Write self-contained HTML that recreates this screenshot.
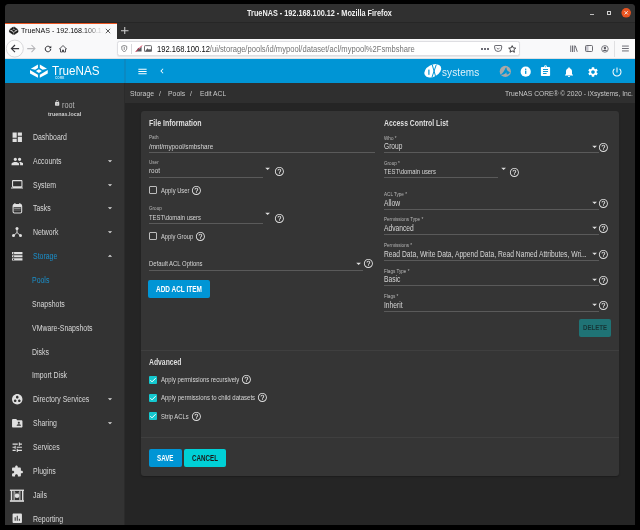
<!DOCTYPE html>
<html><head><meta charset="utf-8">
<style>
*{margin:0;padding:0;box-sizing:border-box}
html,body{width:640px;height:530px;overflow:hidden;background:#000}
body{position:relative;font-family:"Liberation Sans",sans-serif}
.a{position:absolute;display:block}
.t{position:absolute;white-space:nowrap;line-height:1}
#tl{position:absolute;left:0;top:0;width:640px;height:530px;will-change:transform}
</style></head><body>
<div class="a" style="left:5px;top:4px;width:630px;height:521px;background:#252525;border-radius:4px 4px 0 0"></div>
<div class="a" style="left:5px;top:4px;width:630px;height:18px;background:#303030;border-radius:4px 4px 0 0"></div>
<div class="a" style="left:590.1px;top:13.8px;width:4.2px;height:1px;background:#bdbdbd;"></div>
<div class="a" style="left:606.9px;top:10.8px;width:4.4px;height:4.3px;border:0.9px solid #d0d0d0"></div>
<svg class="a" style="left:616px;top:3px" width="20" height="20" viewBox="616 3 20 20"><circle cx="626.2" cy="12.8" r="4.75" fill="#e95420"/><path d="M624.6 11.2L627.8 14.4M627.8 11.2L624.6 14.4" stroke="#f4f4f4" stroke-width="0.9"/></svg>
<div class="a" style="left:5px;top:22px;width:630px;height:17px;background:#2d2d2d;"></div>
<div class="a" style="left:5px;top:22px;width:630px;height:1px;background:#262626;"></div>
<div class="a" style="left:5px;top:23px;width:111.5px;height:16px;background:#f9f9fa;"></div>
<div class="a" style="left:5px;top:23px;width:111.5px;height:1px;background:#e95420;"></div>
<svg class="a" style="left:7.7px;top:24.9px" width="11.6" height="11.35" viewBox="0 0 636 530" preserveAspectRatio="none"><g fill="#111" stroke="#111" stroke-width="28" stroke-linejoin="round"><path d="M100 205L290 92V185L215 232Z"/><path d="M340 92L530 205 415 232 340 185Z"/><path d="M235 268L315 218 395 268 315 318Z"/><path d="M80 240L290 362V447L80 332Z"/><path d="M550 240L340 362V447L550 332Z"/></g></svg>
<svg class="a" style="left:105px;top:27.5px" width="6" height="6" viewBox="0 0 6 6"><path d="M0.8 0.8L5.2 5.2M5.2 0.8L0.8 5.2" stroke="#333" stroke-width="0.8"/></svg>
<svg class="a" style="left:121.3px;top:26.6px" width="7.5" height="7.5" viewBox="0 0 8 8"><path d="M4 0V8M0 4H8" stroke="#d0d0d0" stroke-width="1.1"/></svg>
<div class="a" style="left:5px;top:39px;width:630px;height:20px;background:#f9f9fa;"></div>
<div class="a" style="left:5px;top:58px;width:630px;height:1px;background:#e0e0e2;"></div>
<svg class="a" style="left:0;top:36px" width="40" height="24" viewBox="0 36 40 24"><circle cx="14.8" cy="48.6" r="8.5" fill="#fcfcfc" stroke="#cfcfd2" stroke-width="0.8"/><path d="M11.4 48.6H19.1M15.0 45.0L11.4 48.6L15.0 52.2" stroke="#38383d" stroke-width="1.15" fill="none"/><path d="M27.2 48.6H35.0M31.5 45.0L35.0 48.6L31.5 52.2" stroke="#b5b5b8" stroke-width="1.05" fill="none"/></svg>
<svg class="a" style="left:43.5px;top:44.6px" width="8" height="8" viewBox="0 0 16 16"><path d="M13.5 8a5.5 5.5 0 1 1-1.8-4.1" stroke="#2a2a2e" stroke-width="2" fill="none"/><path d="M14.5 1.5v5h-5z" fill="#2a2a2e"/></svg>
<svg class="a" style="left:59px;top:45px" width="8" height="7.5" viewBox="0 0 16 15"><path d="M8 1L1 8h2v6h4v-4h2v4h4V8h2z" stroke="#2a2a2e" stroke-width="1.6" fill="none" stroke-linejoin="round"/></svg>
<div class="a" style="left:116.6px;top:41.4px;width:403px;height:14.7px;background:#fff;border:0.8px solid #dedee2;border-radius:2.5px;box-shadow:0 0.5px 1px rgba(0,0,0,.08)"></div>
<svg class="a" style="left:121px;top:45px" width="6.5" height="7.2" viewBox="0 0 14 16"><path d="M7 1L1.5 3v4.5C1.5 11 4 13.5 7 15c3-1.5 5.5-4 5.5-7.5V3z" stroke="#5a5a5e" stroke-width="1.6" fill="none"/><path d="M7 4v7" stroke="#5a5a5e" stroke-width="1.6"/></svg>
<div class="a" style="left:131px;top:43.5px;width:0.8px;height:10px;background:#d7d7db;"></div>
<svg class="a" style="left:135px;top:45px" width="7.5" height="7.5" viewBox="0 0 16 16"><path d="M2 14L7 6l3 2 4-6v12z" fill="#5a5a5e"/><path d="M1 15L15 1" stroke="#e22850" stroke-width="1.8"/></svg>
<svg class="a" style="left:144.3px;top:45px" width="8" height="7.3" viewBox="0 0 16 14"><rect x="1" y="1" width="14" height="12" rx="1.5" fill="none" stroke="#5a5a5e" stroke-width="1.8"/><path d="M2 12l5-6 3 3 2-2 3 3v2z" fill="#5a5a5e"/></svg>
<div class="a" style="left:481px;top:48px;width:1.6px;height:1.6px;border-radius:50%;background:#50505a"></div>
<div class="a" style="left:484px;top:48px;width:1.6px;height:1.6px;border-radius:50%;background:#50505a"></div>
<div class="a" style="left:487px;top:48px;width:1.6px;height:1.6px;border-radius:50%;background:#50505a"></div>
<svg class="a" style="left:494.3px;top:45px" width="8.3" height="7" viewBox="0 0 16 14"><path d="M2 1h12a1 1 0 0 1 1 1v4a7 7 0 0 1-14 0V2a1 1 0 0 1 1-1z" fill="none" stroke="#5b5b63" stroke-width="1.8"/><path d="M5 5.5l3 3 3-3" fill="none" stroke="#5b5b63" stroke-width="1.6"/></svg>
<svg class="a" style="left:508.2px;top:44.6px" width="8.4" height="8.4" viewBox="0 0 16 16"><path d="M8 1.2l2 4.3 4.7.5-3.5 3.2 1 4.6L8 11.4l-4.2 2.4 1-4.6L1.3 6l4.7-.5z" fill="none" stroke="#2a2a2e" stroke-width="1.7" stroke-linejoin="round"/></svg>
<svg class="a" style="left:569.5px;top:45px" width="8" height="7" viewBox="0 0 16 14"><path d="M1.5 1v13M5 1v13M8.5 1v13M10.5 1.5l4 12" stroke="#5b5b63" stroke-width="1.8"/></svg>
<svg class="a" style="left:585.2px;top:45px" width="8" height="7" viewBox="0 0 16 14"><rect x="1" y="1" width="14" height="12" rx="2" fill="none" stroke="#5b5b63" stroke-width="1.8"/><rect x="2" y="2" width="5" height="10" fill="#c4c4cc"/></svg>
<svg class="a" style="left:601.2px;top:44.8px" width="7.8" height="7.8" viewBox="0 0 16 16"><circle cx="8" cy="8" r="6.8" fill="none" stroke="#5b5b63" stroke-width="1.6"/><circle cx="8" cy="6.3" r="2.5" fill="#5b5b63"/><path d="M3.5 12.5c1-2.2 2.6-3 4.5-3s3.5.8 4.5 3" fill="#5b5b63"/></svg>
<div class="a" style="left:614.3px;top:41px;width:0.8px;height:16px;background:#e0e0e2;"></div>
<svg class="a" style="left:622.3px;top:45px" width="6.8" height="7" viewBox="0 0 14 14"><path d="M0 2h14M0 7h14M0 12h14" stroke="#50505a" stroke-width="1.7"/></svg>
<div class="a" style="left:5px;top:59px;width:630px;height:24px;background:#0095d5;"></div>
<div class="a" style="left:124px;top:59px;width:1.5px;height:24px;background:#0a89c2;"></div>
<svg class="a" style="left:27px;top:61px" width="24" height="20" viewBox="0 0 636 530"><g fill="#fff"><path d="M100 205L290 92V185L215 232Z"/><path d="M340 92L530 205 415 232 340 185Z"/><path d="M235 268L315 218 395 268 315 318Z"/><path d="M80 240L290 362V447L80 332Z"/><path d="M550 240L340 362V447L550 332Z"/></g></svg>
<svg class="a" style="left:137.10px;top:65.70px;" width="11" height="11" viewBox="0 0 24 24"><path fill="#fff" fill-rule="evenodd" d="M3 18h18v-2H3v2zm0-5h18v-2H3v2zm0-7v2h18V6H3z"/></svg>
<svg class="a" style="left:157.30px;top:66.40px;" width="10" height="10" viewBox="0 0 24 24"><path fill="#fff" fill-rule="evenodd" d="M15.41 7.41L14 6l-6 6 6 6 1.41-1.41L10.83 12z"/></svg>
<svg class="a" style="left:420px;top:60px" width="26" height="22" viewBox="420 60 26 22"><ellipse cx="432.8" cy="70.8" rx="9.0" ry="5.9" transform="rotate(-28 432.8 70.8)" fill="#fff"/><rect x="428.3" y="69.6" width="1.2" height="5.2" fill="#0095d5"/><path d="M432.2 64.6L435.8 77.2M436.3 64.6L432.0 77.2" stroke="#0095d5" stroke-width="1.0"/></svg>
<svg class="a" style="left:0;top:0" width="640" height="90" viewBox="0 0 640 90"><circle cx="505.3" cy="71.4" r="5.6" fill="#aba8a6"/><path d="M500.6 74.4C502.8 73.6 504.2 71.0 505.6 67.8L506.6 67.6C506.4 69.6 507.2 71.4 509.9 72.0C509.4 73.9 507.6 74.9 506.2 74.1C506.9 73.5 506.9 72.8 506.1 72.6C504.9 74.4 502.9 75.0 500.6 74.4Z" fill="#0095d5"/><circle cx="525.7" cy="71.7" r="5.1" fill="#fff"/><circle cx="525.7" cy="69.3" r="0.75" fill="#0095d5"/><rect x="525.05" y="70.6" width="1.3" height="3.3" fill="#0095d5"/><rect x="540.9" y="67.1" width="9.2" height="9" rx="0.8" fill="#fff"/><circle cx="545.5" cy="66.6" r="1.3" fill="#fff"/><circle cx="545.5" cy="66.8" r="0.5" fill="#0095d5"/><rect x="543" y="69.05" width="5" height="0.95" fill="#0095d5"/><rect x="543" y="71.05" width="5" height="0.95" fill="#0095d5"/><rect x="543" y="73.05" width="3.6" height="0.95" fill="#0095d5"/></svg>
<svg class="a" style="left:562.90px;top:65.60px;" width="12" height="12" viewBox="0 0 24 24"><path fill="#fff" fill-rule="evenodd" d="M12 22c1.1 0 2-.9 2-2h-4c0 1.1.89 2 2 2zm6-6v-5c0-3.07-1.64-5.64-4.5-6.32V4c0-.83-.67-1.5-1.5-1.5s-1.5.67-1.5 1.5v.68C7.63 5.36 6 7.92 6 11v5l-2 2v1h16v-1l-2-2z"/></svg>
<svg class="a" style="left:586.90px;top:65.60px;" width="12" height="12" viewBox="0 0 24 24"><path fill="#fff" fill-rule="evenodd" d="M19.14 12.94c.04-.3.06-.61.06-.94 0-.32-.02-.64-.07-.94l2.03-1.58c.18-.14.23-.41.12-.61l-1.92-3.32c-.12-.22-.37-.29-.59-.22l-2.39.96c-.5-.38-1.03-.7-1.62-.94l-.36-2.54c-.04-.24-.24-.41-.48-.41h-3.84c-.24 0-.43.17-.47.41l-.36 2.54c-.59.24-1.13.57-1.62.94l-2.39-.96c-.22-.08-.47 0-.59.22L2.74 8.87c-.12.21-.08.47.12.61l2.03 1.58c-.05.3-.09.63-.09.94s.02.64.07.94l-2.03 1.58c-.18.14-.23.41-.12.61l1.92 3.32c.12.22.37.29.59.22l2.39-.96c.5.38 1.03.7 1.62.94l.36 2.54c.05.24.24.41.48.41h3.84c.24 0 .44-.17.47-.41l.36-2.54c.59-.24 1.13-.56 1.62-.94l2.39.96c.22.08.47 0 .59-.22l1.92-3.32c.12-.22.07-.47-.12-.61l-2.01-1.58zM12 15.6c-1.98 0-3.6-1.62-3.6-3.6s1.62-3.6 3.6-3.6 3.6 1.62 3.6 3.6-1.62 3.6-3.6 3.6z"/></svg>
<svg class="a" style="left:610.60px;top:65.60px;" width="12" height="12" viewBox="0 0 24 24"><path fill="#fff" fill-rule="evenodd" d="M13 3h-2v10h2V3zm4.83 2.17l-1.42 1.42C17.99 7.86 19 9.81 19 12c0 3.87-3.13 7-7 7s-7-3.13-7-7c0-2.19 1.01-4.14 2.58-5.42L6.17 5.17C4.23 6.82 3 9.26 3 12c0 4.97 4.03 9 9 9s9-4.030 9-9c0-2.74-1.23-5.18-3.17-6.83z"/></svg>
<div class="a" style="left:5px;top:83px;width:119px;height:442px;background:#333333;"></div>
<div class="a" style="left:124px;top:83px;width:1px;height:442px;background:#2b2b2b;"></div>
<svg class="a" style="left:53.85px;top:100.05px;" width="6.3" height="6.3" viewBox="0 0 24 24"><path fill="#dcdcdc" fill-rule="evenodd" d="M18 8h-1V6c0-2.76-2.24-5-5-5S7 3.24 7 6v2H6c-1.1 0-2 .9-2 2v10c0 1.1.9 2 2 2h12c1.1 0 2-.9 2-2V10c0-1.1-.9-2-2-2zm-6 9c-1.1 0-2-.9-2-2s.9-2 2-2 2 .9 2 2-.9 2-2 2zm3.1-9H8.9V6c0-1.71 1.39-3.1 3.1-3.1 1.710 0 3.1 1.39 3.1 3.1v2z"/></svg>
<svg class="a" style="left:10.75px;top:130.65px;" width="12.5" height="12.5" viewBox="0 0 24 24"><path fill="#e0e0e0" fill-rule="evenodd" d="M3 13h8V3H3v10zm0 8h8v-6H3v6zm10 0h8V11h-8v10zm0-18v6h8V3h-8z"/></svg>
<svg class="a" style="left:10.55px;top:154.81px;" width="12.9" height="12.9" viewBox="0 0 24 24"><path fill="#e0e0e0" fill-rule="evenodd" d="M16 11c1.66 0 2.99-1.34 2.99-3S17.66 5 16 5c-1.66 0-3 1.34-3 3s1.34 3 3 3zm-8 0c1.66 0 2.99-1.34 2.99-3S9.660 5 8 5C6.34 5 5 6.34 5 8s1.34 3 3 3zm0 2c-2.33 0-7 1.17-7 3.5V19h14v-2.5c0-2.330-4.67-3.5-7-3.5zm8 0c-.29 0-.62.02-.97.05 1.16.84 1.97 1.97 1.970 3.45V19h6v-2.5c0-2.33-4.67-3.5-7-3.5z"/></svg>
<svg class="a" style="left:105.00px;top:155.76px;" width="10" height="10" viewBox="0 0 24 24"><path fill="#dcdcdc" fill-rule="evenodd" d="M7 10l5 5 5-5z"/></svg>
<svg class="a" style="left:10.75px;top:178.37px;" width="12.5" height="12.5" viewBox="0 0 24 24"><path fill="#e0e0e0" fill-rule="evenodd" d="M20 18c1.1 0 1.99-.9 1.99-2L22 6c0-1.1-.9-2-2-2H4c-1.1 0-2 .9-2 2v10c0 1.1.9 2 2 2H0v2h24v-2h-4zM4 6h16v10H4V6z"/></svg>
<svg class="a" style="left:105.00px;top:179.62px;" width="10" height="10" viewBox="0 0 24 24"><path fill="#dcdcdc" fill-rule="evenodd" d="M7 10l5 5 5-5z"/></svg>
<svg class="a" style="left:10.75px;top:202.23px" width="12.5" height="12.5" viewBox="0 0 24 24"><rect x="4" y="5" width="16.5" height="16" rx="2.5" fill="none" stroke="#e0e0e0" stroke-width="2"/><rect x="4" y="5" width="16.5" height="5" fill="#e0e0e0"/><rect x="6.5" y="2" width="2" height="4" fill="#e0e0e0"/><rect x="16" y="2" width="2" height="4" fill="#e0e0e0"/><rect x="6" y="11.5" width="12.5" height="2.5" fill="#8a8a8a"/><rect x="6" y="16" width="12.5" height="1.2" fill="#6a6a6a"/></svg>
<svg class="a" style="left:105.00px;top:203.48px;" width="10" height="10" viewBox="0 0 24 24"><path fill="#dcdcdc" fill-rule="evenodd" d="M7 10l5 5 5-5z"/></svg>
<svg class="a" style="left:105.00px;top:227.34px;" width="10" height="10" viewBox="0 0 24 24"><path fill="#dcdcdc" fill-rule="evenodd" d="M7 10l5 5 5-5z"/></svg>
<svg class="a" style="left:10.75px;top:249.95px;" width="12.5" height="12.5" viewBox="0 0 24 24"><path fill="#e0e0e0" fill-rule="evenodd" d="M2 20h20v-4H2v4zm2-3h2v2H4v-2zM2 4v4h20V4H2zm4 3H4V5h2v2zm-4 7h20v-4H2v4zm2-3h2v2H4v-2z"/></svg>
<svg class="a" style="left:105.00px;top:250.70px;" width="10" height="10" viewBox="0 0 24 24"><path fill="#dcdcdc" fill-rule="evenodd" d="M7 14l5-5 5 5z"/></svg>
<svg class="a" style="left:11px;top:225.84px" width="12" height="12" viewBox="0 0 24 24"><path d="M12 6V13L5.5 19M12 13L18.5 19" stroke="#e0e0e0" stroke-width="2" fill="none"/><circle cx="12" cy="5" r="3" fill="#e0e0e0"/><circle cx="5" cy="19" r="3" fill="#e0e0e0"/><circle cx="19" cy="19" r="3" fill="#e0e0e0"/></svg>
<svg class="a" style="left:10.75px;top:393.11px;" width="12.5" height="12.5" viewBox="0 0 24 24"><path fill="#e0e0e0" fill-rule="evenodd" d="M12 2C6.48 2 2 6.48 2 12s4.48 10 10 10 10-4.48 10-10S17.52 2 12 2zM8 17.5c-1.38 0-2.5-1.12-2.5-2.5s1.12-2.5 2.5-2.5 2.5 1.12 2.5 2.5-1.12 2.5-2.5 2.5zM9.5 8c0-1.38 1.12-2.5 2.5-2.5s2.5 1.12 2.5 2.5-1.12 2.5-2.5 2.5S9.5 9.38 9.5 8zm6.5 9.5c-1.38 0-2.5-1.12-2.5-2.5s1.12-2.5 2.5-2.5 2.5 1.12 2.5 2.5-1.12 2.5-2.5 2.5z"/></svg>
<svg class="a" style="left:105.00px;top:394.36px;" width="10" height="10" viewBox="0 0 24 24"><path fill="#dcdcdc" fill-rule="evenodd" d="M7 10l5 5 5-5z"/></svg>
<svg class="a" style="left:10.75px;top:416.97px;" width="12.5" height="12.5" viewBox="0 0 24 24"><path fill="#e0e0e0" fill-rule="evenodd" d="M20 6h-8l-2-2H4c-1.1 0-1.99.9-1.99 2L2 18c0 1.1.9 2 2 2h16c1.1 0 2-.9 2-2V8c0-1.1-.9-2-2-2zm-5 3c1.1 0 2 .9 2 2s-.9 2-2 2-2-.9-2-2 .9-2 2-2zm4 8h-8v-1c0-1.33 2.67-2 4-2s4 .67 4 2v1z"/></svg>
<svg class="a" style="left:105.00px;top:418.22px;" width="10" height="10" viewBox="0 0 24 24"><path fill="#dcdcdc" fill-rule="evenodd" d="M7 10l5 5 5-5z"/></svg>
<svg class="a" style="left:10.75px;top:440.83px;" width="12.5" height="12.5" viewBox="0 0 24 24"><path fill="#e0e0e0" fill-rule="evenodd" d="M3 17v2h6v-2H3zM3 5v2h10V5H3zm10 16v-2h8v-2h-8v-2h-2v6h2zM7 9v2H3v2h4v2h2V9H7zm14 4v-2H11v2h10zm-6-4h2V7h4V5h-4V3h-2v6z"/></svg>
<svg class="a" style="left:10.75px;top:464.69px;" width="12.5" height="12.5" viewBox="0 0 24 24"><path fill="#e0e0e0" fill-rule="evenodd" d="M20.5 11H19V7c0-1.1-.9-2-2-2h-4V3.5C13 2.12 11.88 1 10.5 1S8 2.12 8 3.5V5H4c-1.1 0-1.99.9-1.99 2v3.8H3.5c1.49 0 2.7 1.21 2.7 2.7s-1.21 2.7-2.7 2.7H2V20c0 1.1.9 2 2 2h3.8v-1.5c0-1.49 1.21-2.7 2.7-2.7 1.49 0 2.7 1.21 2.7 2.7V22H17c1.1 0 2-.9 2-2v-4h1.5c1.38 0 2.5-1.12 2.5-2.5S21.88 11 20.5 11z"/></svg>
<svg class="a" style="left:10.75px;top:512.41px;" width="12.5" height="12.5" viewBox="0 0 24 24"><path fill="#e0e0e0" fill-rule="evenodd" d="M19 3H5c-1.1 0-2 .9-2 2v14c0 1.1.9 2 2 2h14c1.1 0 2-.9 2-2V5c0-1.1-.9-2-2-2zM9 17H7v-7h2v7zm4 0h-2V7h2v10zm4 0h-2v-4h2v4z"/></svg>
<svg class="a" style="left:0;top:480px" width="30" height="30" viewBox="0 480 30 30"><rect x="9.9" y="489.6" width="14.1" height="1.3" fill="#e0e0e0"/><rect x="9.9" y="500.2" width="14.1" height="1.6" fill="#e0e0e0"/><rect x="10.8" y="490" width="1.4" height="10.5" fill="#e0e0e0"/><rect x="22" y="490" width="1.4" height="10.5" fill="#e0e0e0"/><rect x="13.6" y="490" width="1" height="10.5" fill="#d0d0d0"/><rect x="19.4" y="490" width="1" height="10.5" fill="#d0d0d0"/><circle cx="17" cy="495.7" r="2.3" fill="#e0e0e0"/><path d="M15 492.4l0.8 1.2M19 492.4l-0.8 1.2" stroke="#d0d0d0" stroke-width="0.8"/></svg>
<div class="a" style="left:125px;top:83px;width:510px;height:20px;background:#2f2f2f;"></div>
<div class="a" style="left:141px;top:111px;width:478px;height:365px;background:#353535;border-radius:3px;box-shadow:0 1px 1.5px rgba(0,0,0,.25)"></div>
<div class="a" style="left:141px;top:350px;width:478px;height:1px;background:#3f3f3f;"></div>
<div class="a" style="left:141px;top:437px;width:478px;height:1px;background:#3f3f3f;"></div>
<div class="a" style="left:148.75px;top:152px;width:226.5px;height:1px;background:#5a5a5a;"></div>
<div class="a" style="left:148.75px;top:176.5px;width:114px;height:1px;background:#5a5a5a;"></div>
<svg class="a" style="left:262.40px;top:162.80px;" width="11.2" height="11.2" viewBox="0 0 24 24"><path fill="#e0e0e0" fill-rule="evenodd" d="M7 10l5 5 5-5z"/></svg>
<svg class="a" style="left:273.85px;top:166.35px;" width="10.8" height="10.8" viewBox="0 0 24 24"><path fill="#e0e0e0" fill-rule="evenodd" d="M11 18h2v-2h-2v2zm1-16C6.48 2 2 6.48 2 12s4.48 10 10 10 10-4.48 10-10S17.52 2 12 2zm0 18c-4.41 0-8-3.59-8-8s3.59-8 8-8 8 3.590 8 8-3.59 8-8 8zm0-14c-2.21 0-4 1.79-4 4h2c0-1.1.9-2 2-2s2 .9 2 2c0 2-3 1.75-3 5h2c0-2.25 3-2.5 3-5 0-2.21-1.79-4-4-4z"/></svg>
<div class="a" style="left:148.9px;top:186.2px;width:8px;height:8px;border:1.2px solid #bdbdbd;border-radius:1px"></div>
<svg class="a" style="left:190.70px;top:184.90px;" width="10.8" height="10.8" viewBox="0 0 24 24"><path fill="#e0e0e0" fill-rule="evenodd" d="M11 18h2v-2h-2v2zm1-16C6.48 2 2 6.48 2 12s4.48 10 10 10 10-4.48 10-10S17.52 2 12 2zm0 18c-4.41 0-8-3.59-8-8s3.59-8 8-8 8 3.590 8 8-3.59 8-8 8zm0-14c-2.21 0-4 1.79-4 4h2c0-1.1.9-2 2-2s2 .9 2 2c0 2-3 1.75-3 5h2c0-2.25 3-2.5 3-5 0-2.21-1.79-4-4-4z"/></svg>
<div class="a" style="left:148.75px;top:223px;width:114px;height:1px;background:#5a5a5a;"></div>
<svg class="a" style="left:262.40px;top:207.80px;" width="11.2" height="11.2" viewBox="0 0 24 24"><path fill="#e0e0e0" fill-rule="evenodd" d="M7 10l5 5 5-5z"/></svg>
<svg class="a" style="left:273.85px;top:212.60px;" width="10.8" height="10.8" viewBox="0 0 24 24"><path fill="#e0e0e0" fill-rule="evenodd" d="M11 18h2v-2h-2v2zm1-16C6.48 2 2 6.48 2 12s4.48 10 10 10 10-4.48 10-10S17.52 2 12 2zm0 18c-4.41 0-8-3.59-8-8s3.59-8 8-8 8 3.590 8 8-3.59 8-8 8zm0-14c-2.21 0-4 1.79-4 4h2c0-1.1.9-2 2-2s2 .9 2 2c0 2-3 1.75-3 5h2c0-2.25 3-2.5 3-5 0-2.21-1.79-4-4-4z"/></svg>
<div class="a" style="left:148.9px;top:232.2px;width:8px;height:8px;border:1.2px solid #bdbdbd;border-radius:1px"></div>
<svg class="a" style="left:194.60px;top:230.80px;" width="10.8" height="10.8" viewBox="0 0 24 24"><path fill="#e0e0e0" fill-rule="evenodd" d="M11 18h2v-2h-2v2zm1-16C6.48 2 2 6.48 2 12s4.48 10 10 10 10-4.48 10-10S17.52 2 12 2zm0 18c-4.41 0-8-3.59-8-8s3.59-8 8-8 8 3.590 8 8-3.59 8-8 8zm0-14c-2.21 0-4 1.79-4 4h2c0-1.1.9-2 2-2s2 .9 2 2c0 2-3 1.75-3 5h2c0-2.25 3-2.5 3-5 0-2.21-1.79-4-4-4z"/></svg>
<div class="a" style="left:148.9px;top:270px;width:214px;height:1px;background:#5a5a5a;"></div>
<svg class="a" style="left:353.00px;top:258.40px;" width="11.2" height="11.2" viewBox="0 0 24 24"><path fill="#e0e0e0" fill-rule="evenodd" d="M7 10l5 5 5-5z"/></svg>
<svg class="a" style="left:362.60px;top:258.10px;" width="10.8" height="10.8" viewBox="0 0 24 24"><path fill="#e0e0e0" fill-rule="evenodd" d="M11 18h2v-2h-2v2zm1-16C6.48 2 2 6.48 2 12s4.48 10 10 10 10-4.48 10-10S17.52 2 12 2zm0 18c-4.41 0-8-3.59-8-8s3.59-8 8-8 8 3.590 8 8-3.59 8-8 8zm0-14c-2.21 0-4 1.79-4 4h2c0-1.1.9-2 2-2s2 .9 2 2c0 2-3 1.75-3 5h2c0-2.25 3-2.5 3-5 0-2.21-1.79-4-4-4z"/></svg>
<div class="a" style="left:148.2px;top:279.9px;width:61.6px;height:18.2px;background:#0095d5;border-radius:2px"></div>
<div class="a" style="left:383.9px;top:152px;width:214.9px;height:1px;background:#5a5a5a;"></div>
<svg class="a" style="left:588.50px;top:140.75px;" width="11.2" height="11.2" viewBox="0 0 24 24"><path fill="#e0e0e0" fill-rule="evenodd" d="M7 10l5 5 5-5z"/></svg>
<svg class="a" style="left:598.10px;top:141.85px;" width="10.8" height="10.8" viewBox="0 0 24 24"><path fill="#e0e0e0" fill-rule="evenodd" d="M11 18h2v-2h-2v2zm1-16C6.48 2 2 6.48 2 12s4.48 10 10 10 10-4.48 10-10S17.52 2 12 2zm0 18c-4.41 0-8-3.59-8-8s3.59-8 8-8 8 3.590 8 8-3.59 8-8 8zm0-14c-2.21 0-4 1.79-4 4h2c0-1.1.9-2 2-2s2 .9 2 2c0 2-3 1.75-3 5h2c0-2.25 3-2.5 3-5 0-2.21-1.79-4-4-4z"/></svg>
<div class="a" style="left:383.9px;top:177px;width:113.7px;height:1px;background:#5a5a5a;"></div>
<svg class="a" style="left:497.80px;top:162.80px;" width="11.2" height="11.2" viewBox="0 0 24 24"><path fill="#e0e0e0" fill-rule="evenodd" d="M7 10l5 5 5-5z"/></svg>
<svg class="a" style="left:508.90px;top:167.10px;" width="10.8" height="10.8" viewBox="0 0 24 24"><path fill="#e0e0e0" fill-rule="evenodd" d="M11 18h2v-2h-2v2zm1-16C6.48 2 2 6.48 2 12s4.48 10 10 10 10-4.48 10-10S17.52 2 12 2zm0 18c-4.41 0-8-3.59-8-8s3.59-8 8-8 8 3.590 8 8-3.59 8-8 8zm0-14c-2.21 0-4 1.79-4 4h2c0-1.1.9-2 2-2s2 .9 2 2c0 2-3 1.75-3 5h2c0-2.25 3-2.5 3-5 0-2.21-1.79-4-4-4z"/></svg>
<div class="a" style="left:383.9px;top:209px;width:214.9px;height:1px;background:#5a5a5a;"></div>
<svg class="a" style="left:588.50px;top:197.00px;" width="11.2" height="11.2" viewBox="0 0 24 24"><path fill="#e0e0e0" fill-rule="evenodd" d="M7 10l5 5 5-5z"/></svg>
<svg class="a" style="left:598.10px;top:198.10px;" width="10.8" height="10.8" viewBox="0 0 24 24"><path fill="#e0e0e0" fill-rule="evenodd" d="M11 18h2v-2h-2v2zm1-16C6.48 2 2 6.48 2 12s4.48 10 10 10 10-4.48 10-10S17.52 2 12 2zm0 18c-4.41 0-8-3.59-8-8s3.59-8 8-8 8 3.590 8 8-3.59 8-8 8zm0-14c-2.21 0-4 1.79-4 4h2c0-1.1.9-2 2-2s2 .9 2 2c0 2-3 1.75-3 5h2c0-2.25 3-2.5 3-5 0-2.21-1.79-4-4-4z"/></svg>
<div class="a" style="left:383.9px;top:234px;width:214.9px;height:1px;background:#5a5a5a;"></div>
<svg class="a" style="left:588.50px;top:222.20px;" width="11.2" height="11.2" viewBox="0 0 24 24"><path fill="#e0e0e0" fill-rule="evenodd" d="M7 10l5 5 5-5z"/></svg>
<svg class="a" style="left:598.10px;top:223.30px;" width="10.8" height="10.8" viewBox="0 0 24 24"><path fill="#e0e0e0" fill-rule="evenodd" d="M11 18h2v-2h-2v2zm1-16C6.48 2 2 6.48 2 12s4.48 10 10 10 10-4.48 10-10S17.52 2 12 2zm0 18c-4.41 0-8-3.59-8-8s3.59-8 8-8 8 3.590 8 8-3.59 8-8 8zm0-14c-2.21 0-4 1.79-4 4h2c0-1.1.9-2 2-2s2 .9 2 2c0 2-3 1.75-3 5h2c0-2.25 3-2.5 3-5 0-2.21-1.79-4-4-4z"/></svg>
<div class="a" style="left:383.9px;top:260px;width:214.9px;height:1px;background:#5a5a5a;"></div>
<svg class="a" style="left:588.50px;top:247.90px;" width="11.2" height="11.2" viewBox="0 0 24 24"><path fill="#e0e0e0" fill-rule="evenodd" d="M7 10l5 5 5-5z"/></svg>
<svg class="a" style="left:598.10px;top:249.00px;" width="10.8" height="10.8" viewBox="0 0 24 24"><path fill="#e0e0e0" fill-rule="evenodd" d="M11 18h2v-2h-2v2zm1-16C6.48 2 2 6.48 2 12s4.48 10 10 10 10-4.48 10-10S17.52 2 12 2zm0 18c-4.41 0-8-3.59-8-8s3.59-8 8-8 8 3.590 8 8-3.59 8-8 8zm0-14c-2.21 0-4 1.79-4 4h2c0-1.1.9-2 2-2s2 .9 2 2c0 2-3 1.75-3 5h2c0-2.25 3-2.5 3-5 0-2.21-1.79-4-4-4z"/></svg>
<div class="a" style="left:383.9px;top:285px;width:214.9px;height:1px;background:#5a5a5a;"></div>
<svg class="a" style="left:588.50px;top:273.50px;" width="11.2" height="11.2" viewBox="0 0 24 24"><path fill="#e0e0e0" fill-rule="evenodd" d="M7 10l5 5 5-5z"/></svg>
<svg class="a" style="left:598.10px;top:274.60px;" width="10.8" height="10.8" viewBox="0 0 24 24"><path fill="#e0e0e0" fill-rule="evenodd" d="M11 18h2v-2h-2v2zm1-16C6.48 2 2 6.48 2 12s4.48 10 10 10 10-4.48 10-10S17.52 2 12 2zm0 18c-4.41 0-8-3.59-8-8s3.59-8 8-8 8 3.590 8 8-3.59 8-8 8zm0-14c-2.21 0-4 1.79-4 4h2c0-1.1.9-2 2-2s2 .9 2 2c0 2-3 1.75-3 5h2c0-2.25 3-2.5 3-5 0-2.21-1.79-4-4-4z"/></svg>
<div class="a" style="left:383.9px;top:311px;width:214.9px;height:1px;background:#5a5a5a;"></div>
<svg class="a" style="left:588.50px;top:299.00px;" width="11.2" height="11.2" viewBox="0 0 24 24"><path fill="#e0e0e0" fill-rule="evenodd" d="M7 10l5 5 5-5z"/></svg>
<svg class="a" style="left:598.10px;top:300.10px;" width="10.8" height="10.8" viewBox="0 0 24 24"><path fill="#e0e0e0" fill-rule="evenodd" d="M11 18h2v-2h-2v2zm1-16C6.48 2 2 6.48 2 12s4.48 10 10 10 10-4.48 10-10S17.52 2 12 2zm0 18c-4.41 0-8-3.59-8-8s3.59-8 8-8 8 3.590 8 8-3.59 8-8 8zm0-14c-2.21 0-4 1.79-4 4h2c0-1.1.9-2 2-2s2 .9 2 2c0 2-3 1.75-3 5h2c0-2.25 3-2.5 3-5 0-2.21-1.79-4-4-4z"/></svg>
<div class="a" style="left:579.1px;top:318.9px;width:32px;height:18px;background:#1f7375;border-radius:2px"></div>
<div class="a" style="left:148.9px;top:375.50px;width:8px;height:8px;background:#14c8cf;border-radius:1px"></div>
<svg class="a" style="left:148.9px;top:375.50px" width="8" height="8" viewBox="0 0 24 24"><path d="M4 12.5l5 5L20 6.5" stroke="#fff" stroke-width="3" fill="none"/></svg>
<svg class="a" style="left:241.40px;top:374.10px;" width="10.8" height="10.8" viewBox="0 0 24 24"><path fill="#e0e0e0" fill-rule="evenodd" d="M11 18h2v-2h-2v2zm1-16C6.48 2 2 6.48 2 12s4.48 10 10 10 10-4.48 10-10S17.52 2 12 2zm0 18c-4.41 0-8-3.59-8-8s3.59-8 8-8 8 3.590 8 8-3.59 8-8 8zm0-14c-2.21 0-4 1.79-4 4h2c0-1.1.9-2 2-2s2 .9 2 2c0 2-3 1.75-3 5h2c0-2.25 3-2.5 3-5 0-2.21-1.79-4-4-4z"/></svg>
<div class="a" style="left:148.9px;top:393.80px;width:8px;height:8px;background:#14c8cf;border-radius:1px"></div>
<svg class="a" style="left:148.9px;top:393.80px" width="8" height="8" viewBox="0 0 24 24"><path d="M4 12.5l5 5L20 6.5" stroke="#fff" stroke-width="3" fill="none"/></svg>
<svg class="a" style="left:256.90px;top:392.40px;" width="10.8" height="10.8" viewBox="0 0 24 24"><path fill="#e0e0e0" fill-rule="evenodd" d="M11 18h2v-2h-2v2zm1-16C6.48 2 2 6.48 2 12s4.48 10 10 10 10-4.48 10-10S17.52 2 12 2zm0 18c-4.41 0-8-3.59-8-8s3.59-8 8-8 8 3.590 8 8-3.59 8-8 8zm0-14c-2.21 0-4 1.79-4 4h2c0-1.1.9-2 2-2s2 .9 2 2c0 2-3 1.75-3 5h2c0-2.25 3-2.5 3-5 0-2.21-1.79-4-4-4z"/></svg>
<div class="a" style="left:148.9px;top:412.30px;width:8px;height:8px;background:#14c8cf;border-radius:1px"></div>
<svg class="a" style="left:148.9px;top:412.30px" width="8" height="8" viewBox="0 0 24 24"><path d="M4 12.5l5 5L20 6.5" stroke="#fff" stroke-width="3" fill="none"/></svg>
<svg class="a" style="left:190.60px;top:410.90px;" width="10.8" height="10.8" viewBox="0 0 24 24"><path fill="#e0e0e0" fill-rule="evenodd" d="M11 18h2v-2h-2v2zm1-16C6.48 2 2 6.48 2 12s4.48 10 10 10 10-4.48 10-10S17.52 2 12 2zm0 18c-4.41 0-8-3.59-8-8s3.59-8 8-8 8 3.590 8 8-3.59 8-8 8zm0-14c-2.21 0-4 1.79-4 4h2c0-1.1.9-2 2-2s2 .9 2 2c0 2-3 1.75-3 5h2c0-2.25 3-2.5 3-5 0-2.21-1.79-4-4-4z"/></svg>
<div class="a" style="left:148.75px;top:448.75px;width:33.2px;height:17.9px;background:#0095d5;border-radius:2px"></div>
<div class="a" style="left:184px;top:448.75px;width:42px;height:17.9px;background:#00d0d6;border-radius:2px"></div>
<div id="tl">
<span class="t" style="left:247.00px;top:10.00px;font-size:8.176px;color:#f0f0f0;font-weight:bold;transform:scaleX(0.8929);transform-origin:0 0;">TrueNAS - 192.168.100.12 - Mozilla Firefox</span>
<span class="t" style="left:20.80px;top:27.49px;font-size:7.986px;color:#0c0c0d;font-weight:normal;transform:scaleX(0.8929);transform-origin:0 0;width:91.8px;overflow:hidden;-webkit-mask-image:linear-gradient(to right,#000 76%,transparent 100%)">TrueNAS - 192.168.100.12 - Mozilla Firefox</span>
<span class="t" style="left:156.60px;top:45.45px;font-size:8.523px;color:#0c0c0d;font-weight:normal;transform:scaleX(0.8929);transform-origin:0 0;">192.168.100.12<span style="color:#737373">/ui/storage/pools/id/mypool/dataset/acl/mypool%2Fsmbshare</span></span>
<span class="t" style="left:51.90px;top:64.18px;font-size:13.000px;color:#fff;font-weight:normal;transform:scaleX(0.897);transform-origin:0 0">TrueNAS</span>
<span class="t" style="left:54.60px;top:76.92px;font-size:3.360px;color:rgba(255,255,255,.8);font-weight:bold;transform:scaleX(0.8929);transform-origin:0 0;letter-spacing:0.22px">CORE</span>
<span class="t" style="left:442.20px;top:67.14px;font-size:11.500px;color:rgba(255,255,255,.88);font-weight:normal;transform:scaleX(0.8696);transform-origin:0 0;letter-spacing:0.1px">systems</span>
<span class="t" style="left:61.50px;top:101.50px;font-size:8.176px;color:#b8b8b8;font-weight:normal;transform:scaleX(0.8929);transform-origin:0 0;">root</span>
<span class="t" style="left:47.75px;top:111.34px;font-size:6.037px;color:#d0d0d0;font-weight:bold;transform:scaleX(0.8929);transform-origin:0 0;">truenas.local</span>
<span class="t" style="left:32.75px;top:132.78px;font-size:8.688px;color:#d8d8d8;font-weight:normal;transform:scaleX(0.8000);transform-origin:0 0;">Dashboard</span>
<span class="t" style="left:32.75px;top:156.64px;font-size:8.688px;color:#d8d8d8;font-weight:normal;transform:scaleX(0.8000);transform-origin:0 0;">Accounts</span>
<span class="t" style="left:32.75px;top:180.50px;font-size:8.688px;color:#d8d8d8;font-weight:normal;transform:scaleX(0.8000);transform-origin:0 0;">System</span>
<span class="t" style="left:32.75px;top:204.36px;font-size:8.688px;color:#d8d8d8;font-weight:normal;transform:scaleX(0.8000);transform-origin:0 0;">Tasks</span>
<span class="t" style="left:32.75px;top:228.22px;font-size:8.688px;color:#d8d8d8;font-weight:normal;transform:scaleX(0.8000);transform-origin:0 0;">Network</span>
<span class="t" style="left:32.75px;top:252.08px;font-size:8.688px;color:#1a90cc;font-weight:normal;transform:scaleX(0.8000);transform-origin:0 0;">Storage</span>
<span class="t" style="left:31.80px;top:275.94px;font-size:8.688px;color:#1a90cc;font-weight:normal;transform:scaleX(0.8000);transform-origin:0 0;">Pools</span>
<span class="t" style="left:31.80px;top:299.80px;font-size:8.688px;color:#d8d8d8;font-weight:normal;transform:scaleX(0.8000);transform-origin:0 0;">Snapshots</span>
<span class="t" style="left:31.80px;top:323.66px;font-size:8.688px;color:#d8d8d8;font-weight:normal;transform:scaleX(0.8000);transform-origin:0 0;">VMware-Snapshots</span>
<span class="t" style="left:31.80px;top:347.52px;font-size:8.688px;color:#d8d8d8;font-weight:normal;transform:scaleX(0.8000);transform-origin:0 0;">Disks</span>
<span class="t" style="left:31.80px;top:371.38px;font-size:8.688px;color:#d8d8d8;font-weight:normal;transform:scaleX(0.8000);transform-origin:0 0;">Import Disk</span>
<span class="t" style="left:32.75px;top:395.24px;font-size:8.688px;color:#d8d8d8;font-weight:normal;transform:scaleX(0.8000);transform-origin:0 0;">Directory Services</span>
<span class="t" style="left:32.75px;top:419.10px;font-size:8.688px;color:#d8d8d8;font-weight:normal;transform:scaleX(0.8000);transform-origin:0 0;">Sharing</span>
<span class="t" style="left:32.75px;top:442.96px;font-size:8.688px;color:#d8d8d8;font-weight:normal;transform:scaleX(0.8000);transform-origin:0 0;">Services</span>
<span class="t" style="left:32.75px;top:466.82px;font-size:8.688px;color:#d8d8d8;font-weight:normal;transform:scaleX(0.8000);transform-origin:0 0;">Plugins</span>
<span class="t" style="left:32.75px;top:490.68px;font-size:8.688px;color:#d8d8d8;font-weight:normal;transform:scaleX(0.8000);transform-origin:0 0;">Jails</span>
<span class="t" style="left:32.75px;top:514.54px;font-size:8.688px;color:#d8d8d8;font-weight:normal;transform:scaleX(0.8000);transform-origin:0 0;">Reporting</span>
<span class="t" style="left:129.80px;top:89.81px;font-size:7.706px;color:#c8c8c8;font-weight:normal;transform:scaleX(0.8929);transform-origin:0 0;">Storage</span>
<span class="t" style="left:158.50px;top:89.81px;font-size:7.706px;color:#c8c8c8;font-weight:normal;transform:scaleX(0.8929);transform-origin:0 0;">/</span>
<span class="t" style="left:168.00px;top:89.81px;font-size:7.706px;color:#c8c8c8;font-weight:normal;transform:scaleX(0.8929);transform-origin:0 0;">Pools</span>
<span class="t" style="left:190.00px;top:89.81px;font-size:7.706px;color:#c8c8c8;font-weight:normal;transform:scaleX(0.8929);transform-origin:0 0;">/</span>
<span class="t" style="left:199.80px;top:89.88px;font-size:7.538px;color:#c8c8c8;font-weight:normal;transform:scaleX(0.8929);transform-origin:0 0;">Edit ACL</span>
<span class="t" style="left:504.50px;top:89.90px;font-size:7.504px;color:#c8c8c8;font-weight:normal;transform:scaleX(0.8929);transform-origin:0 0;">TrueNAS CORE® © 2020 - iXsystems, Inc.</span>
<span class="t" style="left:148.80px;top:119.35px;font-size:8.750px;color:#dedede;font-weight:bold;transform:scaleX(0.8000);transform-origin:0 0;">File Information</span>
<span class="t" style="left:148.75px;top:135.33px;font-size:5.152px;color:#b8b8b8;font-weight:normal;transform:scaleX(0.8929);transform-origin:0 0;">Path</span>
<span class="t" style="left:148.75px;top:143.72px;font-size:7.112px;color:#d6d6d6;font-weight:normal;transform:scaleX(0.8929);transform-origin:0 0;">/mnt/mypool/smbshare</span>
<span class="t" style="left:148.75px;top:160.33px;font-size:5.152px;color:#b8b8b8;font-weight:normal;transform:scaleX(0.8929);transform-origin:0 0;">User</span>
<span class="t" style="left:148.75px;top:168.22px;font-size:7.112px;color:#d6d6d6;font-weight:normal;transform:scaleX(0.8929);transform-origin:0 0;">root</span>
<span class="t" style="left:160.75px;top:188.23px;font-size:6.530px;color:#d6d6d6;font-weight:normal;transform:scaleX(0.8929);transform-origin:0 0;">Apply User</span>
<span class="t" style="left:148.75px;top:205.93px;font-size:5.152px;color:#b8b8b8;font-weight:normal;transform:scaleX(0.8929);transform-origin:0 0;">Group</span>
<span class="t" style="left:148.75px;top:215.19px;font-size:6.608px;color:#d6d6d6;font-weight:normal;transform:scaleX(0.8929);transform-origin:0 0;">TEST\domain users</span>
<span class="t" style="left:160.75px;top:233.99px;font-size:6.496px;color:#d6d6d6;font-weight:normal;transform:scaleX(0.8929);transform-origin:0 0;">Apply Group</span>
<span class="t" style="left:148.90px;top:260.97px;font-size:6.653px;color:#d6d6d6;font-weight:normal;transform:scaleX(0.8929);transform-origin:0 0;">Default ACL Options</span>
<span class="t" style="left:156.30px;top:284.91px;font-size:8.385px;color:#fff;font-weight:bold;transform:scaleX(0.7692);transform-origin:0 0;">ADD ACL ITEM</span>
<span class="t" style="left:384.20px;top:119.43px;font-size:8.562px;color:#dedede;font-weight:bold;transform:scaleX(0.8000);transform-origin:0 0;">Access Control List</span>
<span class="t" style="left:383.90px;top:136.13px;font-size:5.152px;color:#b8b8b8;font-weight:normal;transform:scaleX(0.8929);transform-origin:0 0;">Who *</span>
<span class="t" style="left:383.90px;top:142.51px;font-size:8.275px;color:#d6d6d6;font-weight:normal;transform:scaleX(0.8000);transform-origin:0 0;">Group</span>
<span class="t" style="left:383.90px;top:161.43px;font-size:5.152px;color:#b8b8b8;font-weight:normal;transform:scaleX(0.8929);transform-origin:0 0;">Group *</span>
<span class="t" style="left:383.90px;top:169.49px;font-size:6.608px;color:#d6d6d6;font-weight:normal;transform:scaleX(0.8929);transform-origin:0 0;">TEST\domain users</span>
<span class="t" style="left:383.90px;top:192.43px;font-size:5.152px;color:#b8b8b8;font-weight:normal;transform:scaleX(0.8929);transform-origin:0 0;">ACL Type *</span>
<span class="t" style="left:383.90px;top:198.72px;font-size:8.375px;color:#d6d6d6;font-weight:normal;transform:scaleX(0.8000);transform-origin:0 0;">Allow</span>
<span class="t" style="left:383.90px;top:217.33px;font-size:5.152px;color:#b8b8b8;font-weight:normal;transform:scaleX(0.8929);transform-origin:0 0;">Permissions Type *</span>
<span class="t" style="left:383.90px;top:223.91px;font-size:8.375px;color:#d6d6d6;font-weight:normal;transform:scaleX(0.8000);transform-origin:0 0;">Advanced</span>
<span class="t" style="left:383.90px;top:243.03px;font-size:5.152px;color:#b8b8b8;font-weight:normal;transform:scaleX(0.8929);transform-origin:0 0;">Permissions *</span>
<span class="t" style="left:383.90px;top:249.60px;font-size:8.413px;color:#d6d6d6;font-weight:normal;transform:scaleX(0.8000);transform-origin:0 0;">Read Data, Write Data, Append Data, Read Named Attributes, Wri...</span>
<span class="t" style="left:383.90px;top:268.93px;font-size:5.152px;color:#b8b8b8;font-weight:normal;transform:scaleX(0.8929);transform-origin:0 0;">Flags Type *</span>
<span class="t" style="left:383.90px;top:275.22px;font-size:8.375px;color:#d6d6d6;font-weight:normal;transform:scaleX(0.8000);transform-origin:0 0;">Basic</span>
<span class="t" style="left:383.90px;top:294.33px;font-size:5.152px;color:#b8b8b8;font-weight:normal;transform:scaleX(0.8929);transform-origin:0 0;">Flags *</span>
<span class="t" style="left:383.90px;top:300.72px;font-size:8.375px;color:#d6d6d6;font-weight:normal;transform:scaleX(0.8000);transform-origin:0 0;">Inherit</span>
<span class="t" style="left:583.00px;top:324.21px;font-size:7.930px;color:#163536;font-weight:bold;transform:scaleX(0.7692);transform-origin:0 0;">DELETE</span>
<span class="t" style="left:149.20px;top:358.06px;font-size:8.500px;color:#dedede;font-weight:bold;transform:scaleX(0.8000);transform-origin:0 0;">Advanced</span>
<span class="t" style="left:160.80px;top:377.16px;font-size:6.675px;color:#d6d6d6;font-weight:normal;transform:scaleX(0.8929);transform-origin:0 0;">Apply permissions recursively</span>
<span class="t" style="left:160.80px;top:395.43px;font-size:6.754px;color:#d6d6d6;font-weight:normal;transform:scaleX(0.8929);transform-origin:0 0;">Apply permissions to child datasets</span>
<span class="t" style="left:160.80px;top:414.02px;font-size:6.541px;color:#d6d6d6;font-weight:normal;transform:scaleX(0.8929);transform-origin:0 0;">Strip ACLs</span>
<span class="t" style="left:156.90px;top:453.89px;font-size:8.438px;color:#fff;font-weight:bold;transform:scaleX(0.7407);transform-origin:0 0;">SAVE</span>
<span class="t" style="left:191.80px;top:453.89px;font-size:8.438px;color:#1a1a1a;font-weight:bold;transform:scaleX(0.7407);transform-origin:0 0;">CANCEL</span>
</div></body></html>
